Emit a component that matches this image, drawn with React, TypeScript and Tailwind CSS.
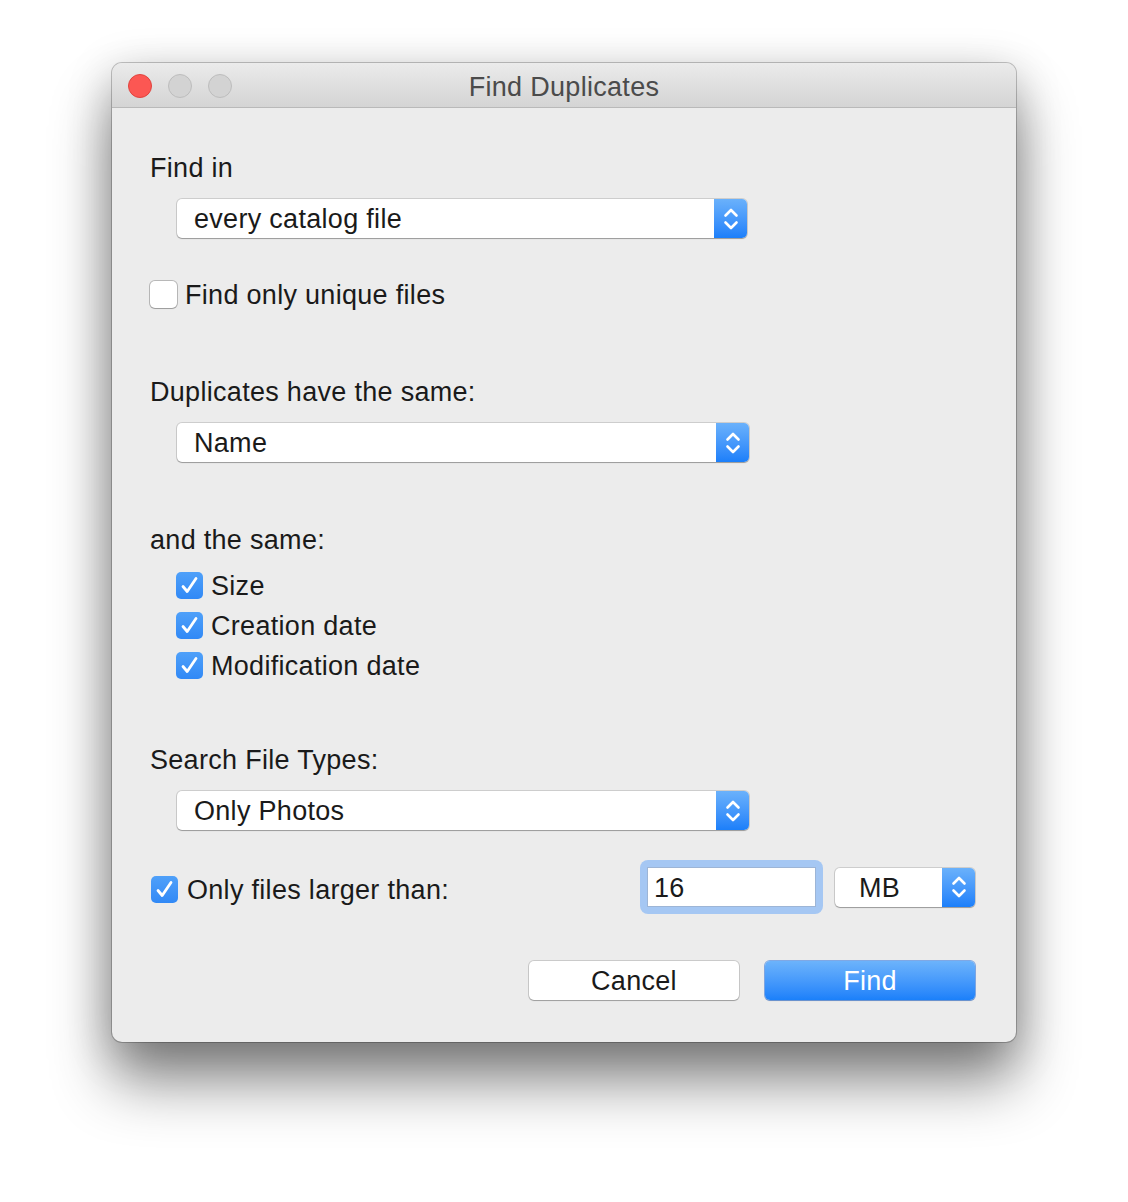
import type { ReactNode } from "react";

const FONT = { fontFamily: '"Liberation Sans", Arial, sans-serif', letterSpacing: "0.3px" };

function Stepper() {
  return (
    <div className="flex h-full w-[33px] shrink-0 items-center justify-center rounded-r-[5px] bg-gradient-to-b from-[#6ab1fb] to-[#1b7ffa]">
      <svg width="16" height="26" viewBox="0 0 16 26" fill="none" stroke="white" strokeWidth="2.6" strokeLinecap="round" strokeLinejoin="round" aria-hidden="true">
        <path d="M2.5 9.5L8 4l5.5 5.5" />
        <path d="M2.5 16.5L8 22l5.5-5.5" />
      </svg>
    </div>
  );
}

function PopUp({ value, width, textPad = "pl-[17px]" }: { value: string; width: string; textPad?: string }) {
  return (
    <div className={`flex h-[39px] ${width} items-center rounded-[5px] bg-white shadow-[0_0_0_1px_rgba(0,0,0,0.13),0_1px_1px_rgba(0,0,0,0.25)]`}>
      <span className={`flex-1 ${textPad} pt-[2px] text-[27px] leading-none text-[#1a1a1a]`}>{value}</span>
      <Stepper />
    </div>
  );
}

function CheckBox({ checked }: { checked: boolean }) {
  if (!checked) {
    return (
      <div className="h-[27px] w-[27px] shrink-0 rounded-[5px] bg-white shadow-[0_0_0_1px_rgba(0,0,0,0.22),0_1px_1px_rgba(0,0,0,0.15)]" />
    );
  }
  return (
    <div className="flex h-[27px] w-[27px] shrink-0 items-center justify-center rounded-[5px] bg-gradient-to-b from-[#4fa0f9] to-[#3189f6]">
      <svg width="27" height="27" viewBox="0 0 27 27" fill="none" stroke="white" strokeWidth="2.8" strokeLinecap="round" strokeLinejoin="round" aria-hidden="true">
        <path d="M7 14.5l4.2 5L20 6.5" />
      </svg>
    </div>
  );
}

function CheckRow({ checked, label, className = "" }: { checked: boolean; label: string; className?: string }) {
  return (
    <div className={`flex h-[28px] items-center gap-[8px] ${className}`}>
      <CheckBox checked={checked} />
      <span className="pt-[2px] text-[27px] leading-none text-[#1a1a1a]">{label}</span>
    </div>
  );
}

function Label({ children, className = "" }: { children: ReactNode; className?: string }) {
  return <div className={`flex h-[30px] items-center pt-[2px] text-[27px] leading-none text-[#1a1a1a] ${className}`}>{children}</div>;
}

export default function App() {
  return (
    <div className="min-h-[1202px] bg-white pl-[112px] pt-[63px]" style={FONT}>
      <div className="flex h-[979px] w-[904px] flex-col rounded-[10px] bg-[#ececec] shadow-[0_0_0_1px_rgba(0,0,0,0.22),0_40px_60px_rgba(0,0,0,0.45),0_10px_45px_rgba(0,0,0,0.22)]">
        {/* title bar */}
        <div className="relative flex h-[45px] items-center justify-center rounded-t-[10px] border-b border-[#b9b9b9] bg-gradient-to-b from-[#ebebeb] to-[#d4d4d4]">
          <div className="absolute left-[16px] top-[11px] flex gap-[16px]">
            <div className="h-[24px] w-[24px] rounded-full border border-[#e0443e] bg-[#fc5753]" />
            <div className="h-[24px] w-[24px] rounded-full border border-[#bdbdbd] bg-[#d3d3d3]" />
            <div className="h-[24px] w-[24px] rounded-full border border-[#bdbdbd] bg-[#d3d3d3]" />
          </div>
          <span className="mt-[4px] text-[27px] leading-none text-[#4b4b4b]">Find Duplicates</span>
        </div>

        {/* content */}
        <div className="flex flex-1 flex-col pl-[38px] pr-[41px]">
          <Label className="mt-[44px]">Find in</Label>
          <div className="ml-[27px] mt-[17px]">
            <PopUp value="every catalog file" width="w-[570px]" />
          </div>
          <CheckRow checked={false} label="Find only unique files" className="mt-[42px]" />

          <Label className="mt-[68px]">Duplicates have the same:</Label>
          <div className="ml-[27px] mt-[17px]">
            <PopUp value="Name" width="w-[572px]" />
          </div>

          <Label className="mt-[62px]">and the same:</Label>
          <div className="ml-[26px] mt-[17px] flex flex-col gap-[12px]">
            <CheckRow checked label="Size" />
            <CheckRow checked label="Creation date" />
            <CheckRow checked label="Modification date" />
          </div>

          <Label className="mt-[65px]">Search File Types:</Label>
          <div className="ml-[27px] mt-[17px]">
            <PopUp value="Only Photos" width="w-[572px]" />
          </div>

          <div className="mt-[30px] flex h-[54px] items-center">
            <CheckRow checked label="Only files larger than:" className="ml-[1px] mt-[4px] gap-[9px]" />
            <div className="ml-auto rounded-[8px] bg-[#a5c7f3] p-[7px]">
              <div className="flex h-[40px] w-[169px] items-center border border-[#9db5d6] bg-white pl-[6px] pt-[2px] text-[27px] leading-none text-[#1a1a1a]">
                16
              </div>
            </div>
            <div className="ml-[12px]">
              <PopUp value="MB" width="w-[140px]" textPad="pl-[24px]" />
            </div>
          </div>

          <div className="mt-[47px] flex justify-end gap-[26px]">
            <button type="button" className="flex h-[39px] w-[210px] items-center justify-center rounded-[5px] bg-white pt-[2px] text-[27px] leading-none text-[#1a1a1a] shadow-[0_0_0_1px_rgba(0,0,0,0.14),0_1px_1px_rgba(0,0,0,0.22)]">
              Cancel
            </button>
            <button type="button" className="flex h-[39px] w-[210px] items-center justify-center rounded-[5px] bg-gradient-to-b from-[#6cb3fb] to-[#1a80fa] pt-[2px] text-[27px] leading-none text-white shadow-[0_0_0_1px_rgba(20,100,220,0.5),0_1px_1px_rgba(0,0,0,0.2)]">
              Find
            </button>
          </div>
        </div>
      </div>
    </div>
  );
}
